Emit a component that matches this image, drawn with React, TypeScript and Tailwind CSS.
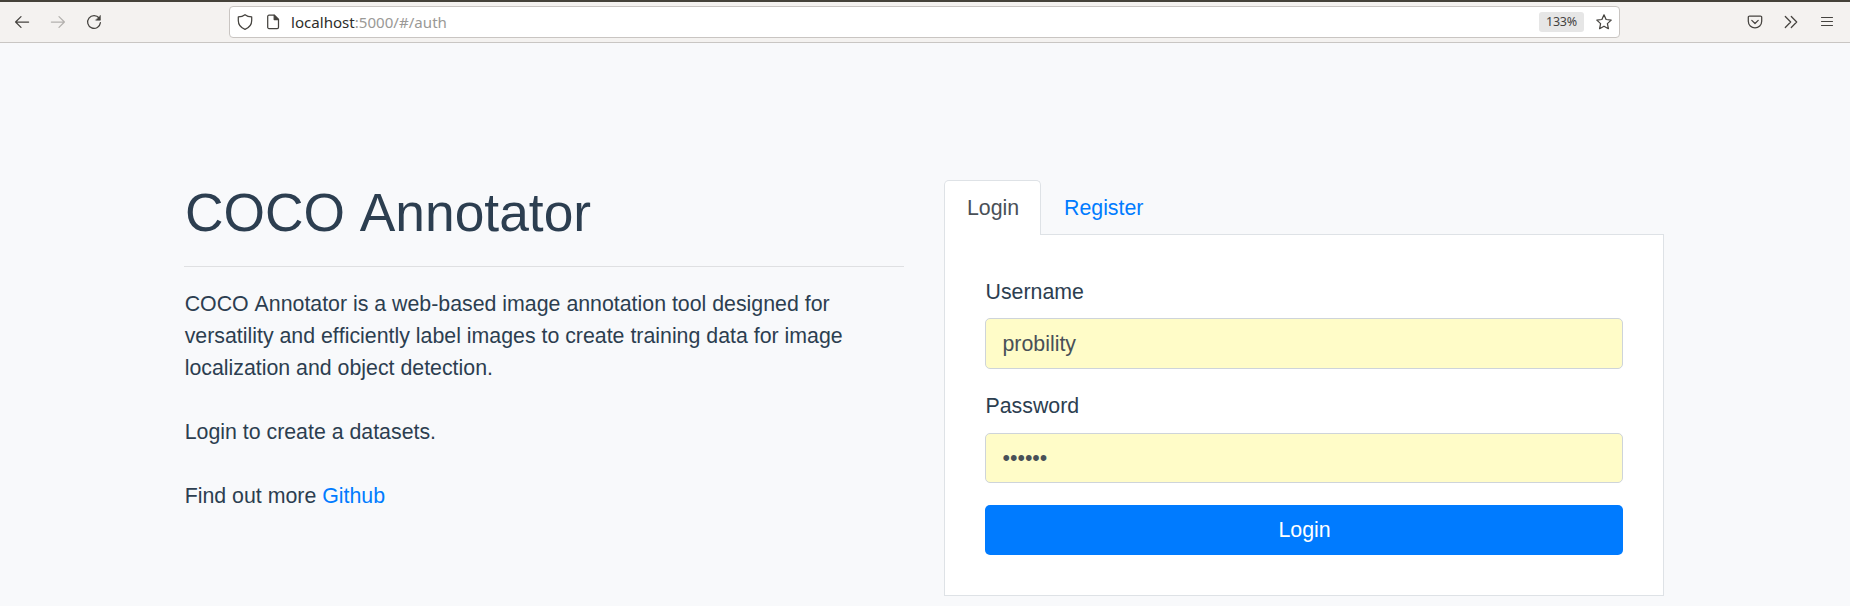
import React, { type ReactNode } from "react";

function Icon({ children, className = "" }: { children: ReactNode; className?: string }) {
  return (
    <svg
      viewBox="0 0 16 16"
      className={`h-4 w-4 shrink-0 ${className}`}
      fill="none"
      stroke="currentColor"
      strokeWidth="1.25"
      strokeLinecap="round"
      strokeLinejoin="round"
    >
      {children}
    </svg>
  );
}

function BrowserBar() {
  return (
    <header className="flex h-[43px] items-center border-t-2 border-b border-t-[#45423a] border-b-[#c9c6c3] bg-[#f4f2f0] pr-[15px] pl-[14px] text-[#45433f]">
      <nav className="flex w-[215px] items-center gap-5">
        <Icon>
          <path d="M14.600 8H1.600M7 2.600 1.600 8 7 13.400" />
        </Icon>
        <Icon className="text-[#b3b1ae]">
          <path d="M1.400 8h13M9 2.600 14.400 8 9 13.400" />
        </Icon>
        <Icon>
          <path d="M13.200 4.200A6.400 6.400 0 1 0 14.400 8.600" />
          <path d="M14.400 1.700v4.500H9.900z" fill="currentColor" strokeWidth="0.6" />
        </Icon>
      </nav>
      <div className="flex h-8 w-[1391px] items-center rounded-[4px] border border-[#c9c5c2] bg-white pr-[7px] pl-[7px]">
        <Icon>
          <path d="M8 .7C6.200 2.100 3.900 2.800 1.300 2.900v3.500c0 4 2.500 7.200 6.700 8.900 4.200-1.700 6.700-4.900 6.700-8.900V2.900C12.100 2.800 9.800 2.100 8 .7z" />
        </Icon>
        <Icon className="ml-3">
          <path d="M4 1.200h5.200l4.300 4.300v7.700a1.300 1.300 0 0 1-1.300 1.300H4a1.300 1.300 0 0 1-1.300-1.300V2.500A1.300 1.300 0 0 1 4 1.200z" />
          <path d="M9.200 1.200v4.300h4.300z" fill="currentColor" />
        </Icon>
        <div className="ml-[10px] flex-1 font-['Noto_Sans',sans-serif] text-[15.1px] leading-5 text-[#9a9996]">
          <span className="text-[#2e2d2b]">localhost</span>:5000/#/auth
        </div>
        <span className="flex h-5 w-[45px] items-center justify-center rounded-[3px] bg-[#e6e6e6] font-['Noto_Sans',sans-serif] text-[12.5px] tracking-[-0.2px] text-[#45433f]">
          133%
        </span>
        <Icon className="ml-3">
          <path d="m8 .8 2.100 4.700 5.100.6-3.800 3.500 1 5.100L8 12.200l-4.400 2.500 1-5.100L.8 6.100l5.100-.6z" />
        </Icon>
      </div>
      <div className="ml-auto flex items-center gap-5">
        <Icon>
          <path d="M2.600 2h10.800a1.300 1.300 0 0 1 1.300 1.300v3.900a6.700 6.700 0 0 1-13.400 0V3.300A1.300 1.300 0 0 1 2.600 2z" />
          <path d="M4.800 6.400 8 9.500l3.200-3.100" />
        </Icon>
        <Icon>
          <path d="m2.300 2.500 5.400 5.500-5.400 5.500M8.300 2.500l5.400 5.500-5.400 5.500" />
        </Icon>
        <Icon>
          <path d="M2.500 3.500h11M2.500 7.500h11M2.500 11.500h11" strokeWidth="1.1" />
        </Icon>
      </div>
    </header>
  );
}

function Intro() {
  return (
    <section className="w-[720px]">
      <h1 className="pt-px pl-px text-[53.333px] leading-[64px] font-normal">COCO Annotator</h1>
      <hr className="mt-[21px] mb-[21px] border-t border-[#dfe0e2]" />
      <p className="pl-[0.67px]">
        COCO Annotator is a web-based image annotation tool designed for
        <br />
        versatility and efficiently label images to create training data for image
        <br />
        localization and object detection.
      </p>
      <p className="mt-8 pl-[0.67px]">Login to create a datasets.</p>
      <p className="mt-8 pl-[0.67px]">
        Find out more <a className="text-[#007bff]">Github</a>
      </p>
    </section>
  );
}

function LoginCard() {
  return (
    <section className="w-[720px]">
      <div className="flex h-[54px]">
        <a className="z-10 h-[55px] w-[97px] rounded-t-[5px] border border-b-0 border-[#dee2e6] bg-white pt-[11px] pl-[22px] text-[#495057]">
          Login
        </a>
        <a className="pt-[12px] pl-[23px] text-[#007bff]">Register</a>
      </div>
      <form className="flex h-[362px] flex-col border border-[#dee2e6] bg-white px-10 pt-[41px]">
        <label className="pl-[0.5px]">Username</label>
        <input
          type="text"
          defaultValue="probility"
          className="mt-[10px] h-[51px] rounded-[5px] border border-[#ced4da] bg-[#fffcc8] pt-[2px] pr-4 pl-[16.5px] text-[#495057] outline-none"
        />
        <label className="mt-[21px] pl-[0.5px]">Password</label>
        <input
          type="text"
          defaultValue="••••••"
          className="mt-[11px] h-[50px] rounded-[5px] border border-[#ced4da] bg-[#fffcc8] pr-4 pl-[16.5px] text-[#495057] outline-none"
        />
        <button type="button" className="mt-[22px] h-[50px] rounded-[5px] bg-[#007bff] pl-px text-white">
          Login
        </button>
      </form>
    </section>
  );
}

export default function App() {
  return (
    <div className="h-[606px] w-[1850px] overflow-hidden bg-[#f8f9fb] font-['Liberation_Sans',Arial,sans-serif] text-[21.333px] leading-8 text-[#2c3e50] [font-kerning:none]">
      <BrowserBar />
      <main className="flex gap-10 pt-[137px] pl-[184px]">
        <Intro />
        <LoginCard />
      </main>
    </div>
  );
}
